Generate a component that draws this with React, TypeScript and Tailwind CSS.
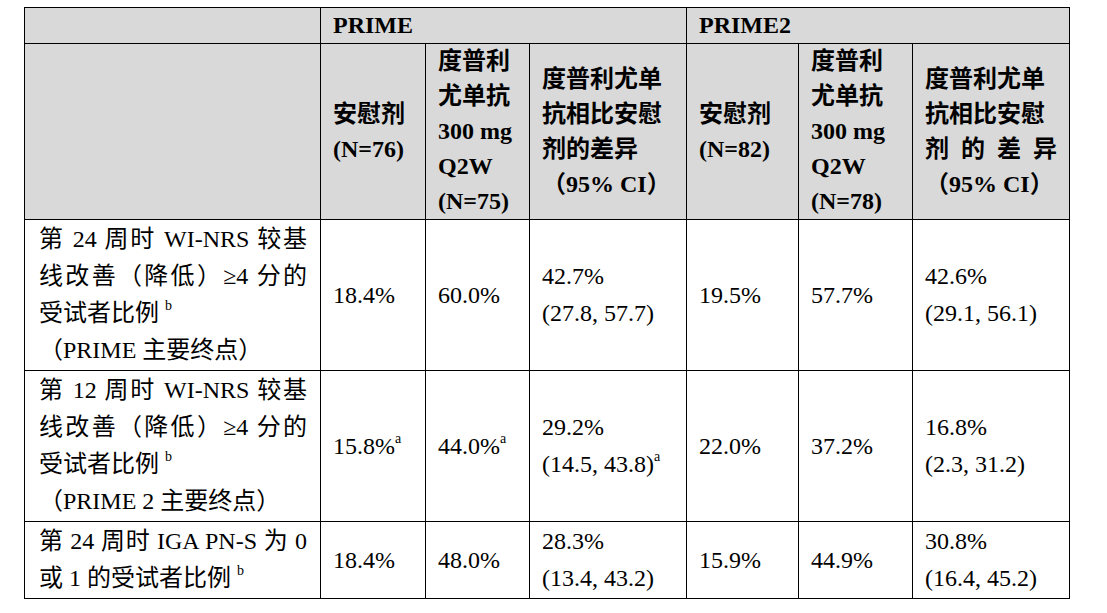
import React from "react";

// Cell classes
const th = "border border-black bg-[#d9d9d9] px-3 align-middle text-left font-bold";
const td = "border border-black px-3 py-px align-middle text-left";

const Sup = ({ c }: { c: string }) => (
  <sup className="relative -top-[2px] align-super text-[14px] leading-none">{c}</sup>
);

// One line stretched to the full cell width (justified, like the source document)
const Just = ({ children }: { children: React.ReactNode }) => (
  <div className="whitespace-nowrap text-justify [text-align-last:justify]">{children}</div>
);

const Line = ({ children }: { children: React.ReactNode }) => (
  <div className="whitespace-nowrap">{children}</div>
);

interface Row {
  label: React.ReactNode;
  cells: React.ReactNode[][];
}

const rows: Row[] = [
  {
    label: (
      <>
        <Just>第 24 周时 WI-NRS 较基</Just>
        <Just>线改善（降低）≥4 分的</Just>
        <Line>
          受试者比例 <Sup c="b" />
        </Line>
        <Line>（PRIME 主要终点）</Line>
      </>
    ),
    cells: [
      ["18.4%"],
      ["60.0%"],
      ["42.7%", "(27.8, 57.7)"],
      ["19.5%"],
      ["57.7%"],
      ["42.6%", "(29.1, 56.1)"],
    ],
  },
  {
    label: (
      <>
        <Just>第 12 周时 WI-NRS 较基</Just>
        <Just>线改善（降低）≥4 分的</Just>
        <Line>
          受试者比例 <Sup c="b" />
        </Line>
        <Line>（PRIME 2 主要终点）</Line>
      </>
    ),
    cells: [
      [
        <span key="x">
          15.8%
          <Sup c="a" />
        </span>,
      ],
      [
        <span key="x">
          44.0%
          <Sup c="a" />
        </span>,
      ],
      [
        "29.2%",
        <span key="x">
          (14.5, 43.8)
          <Sup c="a" />
        </span>,
      ],
      ["22.0%"],
      ["37.2%"],
      ["16.8%", "(2.3, 31.2)"],
    ],
  },
  {
    label: (
      <>
        <Just>第 24 周时 IGA PN-S 为 0</Just>
        <Line>
          或 1 的受试者比例 <Sup c="b" />
        </Line>
      </>
    ),
    cells: [
      ["18.4%"],
      ["48.0%"],
      ["28.3%", "(13.4, 43.2)"],
      ["15.9%"],
      ["44.9%"],
      ["30.8%", "(16.4, 45.2)"],
    ],
  },
];

export default function App() {
  return (
    <div
      className="min-h-[613px] w-full bg-white pl-6 pt-[7px] text-black"
      style={{ fontFamily: '"Liberation Serif", "Noto Sans CJK SC", serif' }}
    >
      <table className="w-[1045px] table-fixed border-collapse text-[24px]">
        <colgroup>
          <col className="w-[296px]" />
          <col className="w-[105px]" />
          <col className="w-[104px]" />
          <col className="w-[157px]" />
          <col className="w-[112px]" />
          <col className="w-[114px]" />
          <col className="w-[157px]" />
        </colgroup>
        <thead className="leading-[35px]">
          <tr className="h-[36px]">
            <th className={th}></th>
            <th className={th} colSpan={3}>
              PRIME
            </th>
            <th className={th} colSpan={3}>
              PRIME2
            </th>
          </tr>
          <tr className="h-[176px]">
            <th className={th}></th>
            <th className={th}>
              <Line>安慰剂</Line>
              <Line>(N=76)</Line>
            </th>
            <th className={th}>
              <Line>度普利</Line>
              <Line>尤单抗</Line>
              <Line>300 mg</Line>
              <Line>Q2W</Line>
              <Line>(N=75)</Line>
            </th>
            <th className={th}>
              <Line>度普利尤单</Line>
              <Line>抗相比安慰</Line>
              <Line>剂的差异</Line>
              <Line>（95% CI）</Line>
            </th>
            <th className={th}>
              <Line>安慰剂</Line>
              <Line>(N=82)</Line>
            </th>
            <th className={th}>
              <Line>度普利</Line>
              <Line>尤单抗</Line>
              <Line>300 mg</Line>
              <Line>Q2W</Line>
              <Line>(N=78)</Line>
            </th>
            <th className={th}>
              <Line>度普利尤单</Line>
              <Line>抗相比安慰</Line>
              <Just>剂的差异</Just>
              <Line>（95% CI）</Line>
            </th>
          </tr>
        </thead>
        <tbody className="leading-[37px]">
          {rows.map((r, i) => (
            <tr key={i}>
              <td className={`${td} pl-[14px] pr-[13px]`}>{r.label}</td>
              {r.cells.map((c, j) => (
                <td key={j} className={td}>
                  {c.map((line, k) => (
                    <Line key={k}>{line}</Line>
                  ))}
                </td>
              ))}
            </tr>
          ))}
        </tbody>
      </table>
    </div>
  );
}
